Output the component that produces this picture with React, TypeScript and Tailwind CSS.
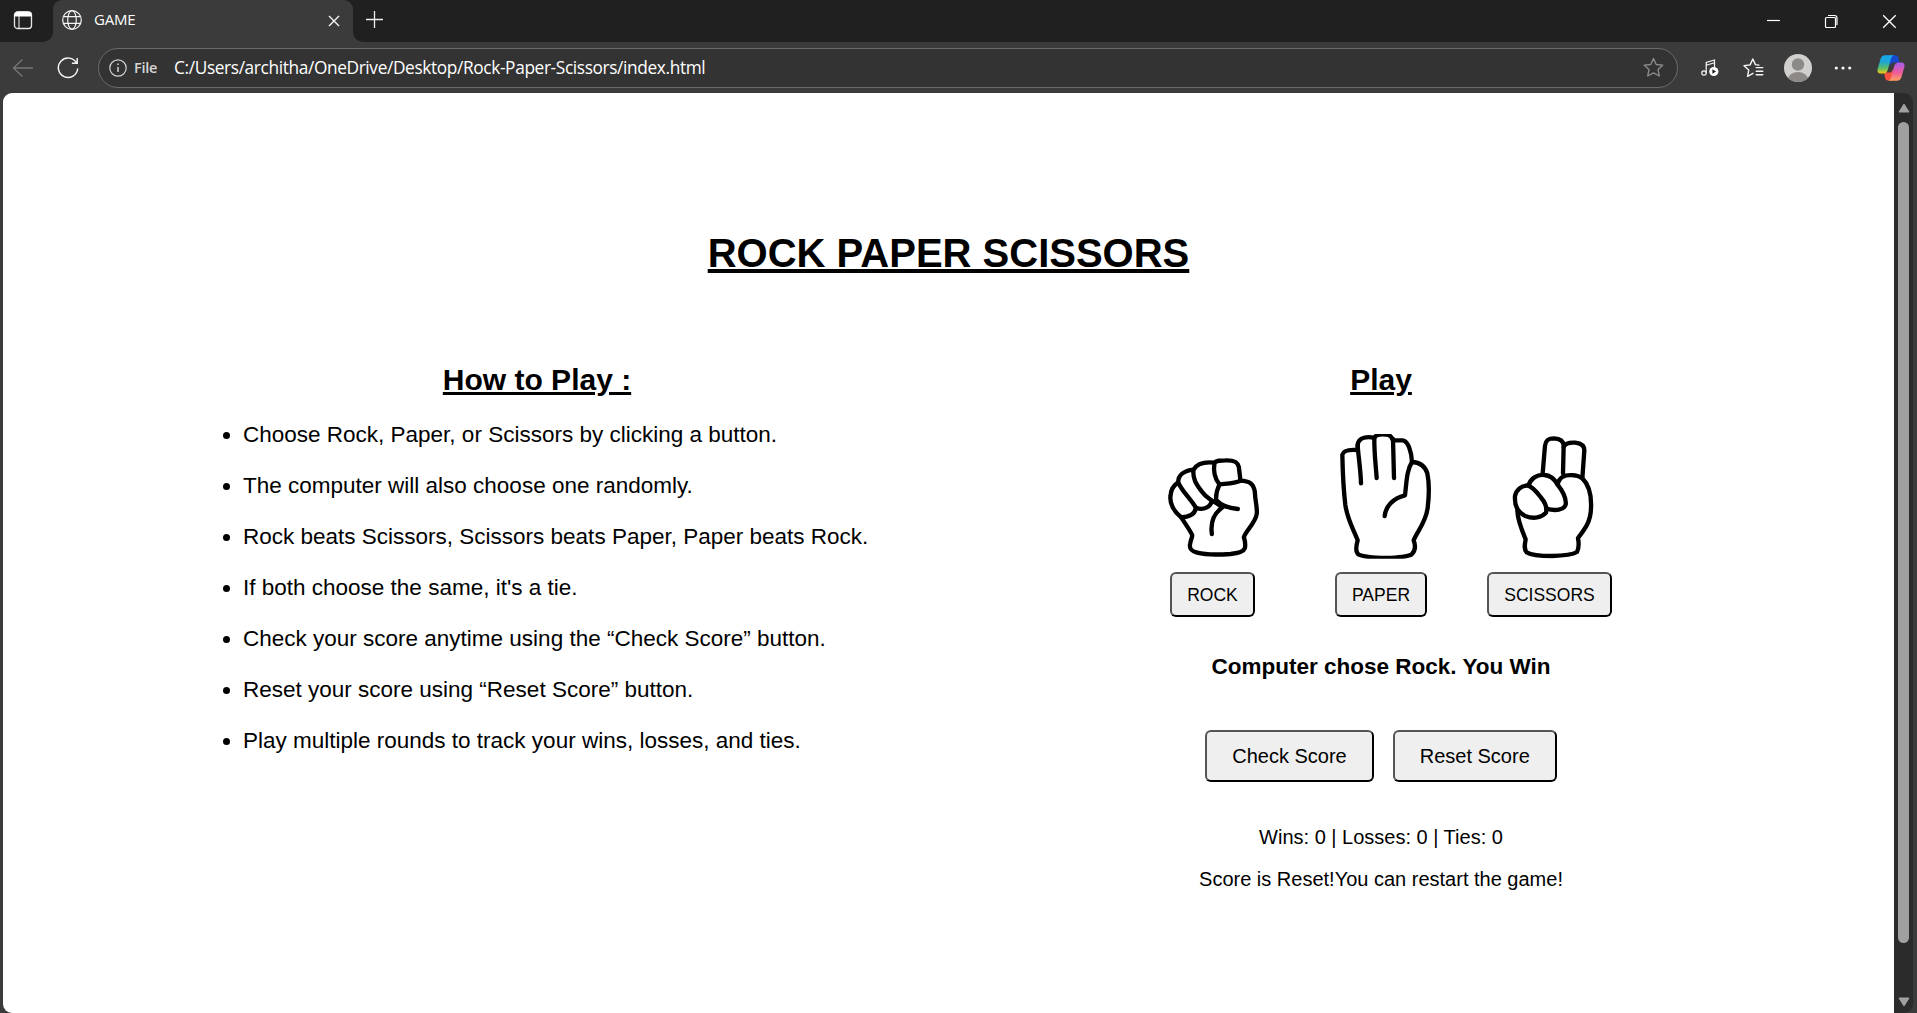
import React from "react";

const rules = [
  "Choose Rock, Paper, or Scissors by clicking a button.",
  "The computer will also choose one randomly.",
  "Rock beats Scissors, Scissors beats Paper, Paper beats Rock.",
  "If both choose the same, it's a tie.",
  "Check your score anytime using the “Check Score” button.",
  "Reset your score using “Reset Score” button.",
  "Play multiple rounds to track your wins, losses, and ties.",
];

const hands = [
  {
    name: "ROCK",
    viewBox: "-22.5 36 420 390",
    paths: [
      "M92 292 C70 275 57 250 60 228 C61 207 70 195 83 187 C83 166 100 152 129 149 C140 130 165 125 192 128 C198 121 207 121 225 121 C250 120 262 125 265 141 L270 182 C297 183 309 191 313 215 C314 245 320 258 319 280 C317 306 285 334 280 352 C284 363 286 371 283 385 C279 396 262 400 240 402 C210 404 165 405 140 398 C120 393 116 385 119 371 C121 358 126 352 125 345 C120 333 105 312 92 292",
      "M83 187 C95 215 120 235 136 263 C134 281 118 291 92 292",
      "M129 149 C126 176 137 192 152 212 C163 228 176 236 184 242 C181 260 160 273 136 263",
      "M192 128 C188 153 190 173 207 193 C235 190 252 190 270 182",
      "M207 193 C199 210 196 229 197 240 C211 256 232 264 262 267",
      "M184 242 C196 248 206 255 216 262 C192 280 179 301 184 342",
    ],
  },
  {
    name: "PAPER",
    viewBox: "-27 36 420 390",
    paths: [
      "M113 90 C90 88 70 91 67 104 C68 155 70 205 76 255 C83 302 101 328 113 361 C108 378 106 395 115 403 C130 411 160 413 198 414 C231 413 261 411 274 404 C286 394 288 380 281 361 C292 333 317 309 323 264 C327 230 327 184 322 160 C315 138 298 127 276 126 C275 98 265 63 248 61 C239 61 230 61 219 61 C213 43 201 43 188 43 C174 43 166 46 163 54 C145 49 115 50 113 75 Z",
      "M113 75 C115 110 122 148 123 190",
      "M163 52 C162 93 167 132 170 174",
      "M219 57 L222 174",
      "M276 126 C260 151 260 184 255 226 C218 235 197 260 194 288",
    ],
  },
  {
    name: "SCISSORS",
    viewBox: "0 36 420 390",
    paths: [
      "M188 160 L195 77 C197 59 207 55 222 55 C239 56 250 62 251 76 L249 160",
      "M251 80 C258 67 274 67 286 68 C303 70 313 78 313 91 L307 175",
      "M112 272 C113 300 125 330 137 358 C134 374 131 387 140 397 C156 407 188 408 216 408 C248 407 274 406 291 396 C298 383 297 371 294 354 C316 326 332 304 333 265 C335 222 325 192 307 175 C290 163 260 163 249 170 C238 176 235 184 233 194",
      "M145 197 C152 175 171 163 193 165 C213 166 225 180 233 194 C249 215 260 235 257 254 C252 270 227 274 199 266",
      "M145 197 C125 194 108 211 105 228 C103 257 112 277 136 288 C161 298 185 293 198 278 C202 262 194 246 184 234 C170 216 160 202 145 197 Z",
    ],
  },
];

function Hand({ viewBox, paths }: { viewBox: string; paths: string[] }) {
  return (
    <svg className="h-[130px] w-[140px]" viewBox={viewBox} fill="none" stroke="#000" strokeWidth="13" strokeLinecap="round" strokeLinejoin="round">
      <defs>
        <clipPath id="hand-frame">
          <rect x="0" y="42" width="420" height="374" />
        </clipPath>
      </defs>
      <g clipPath="url(#hand-frame)">
        {paths.map((d) => (
          <path key={d} d={d} />
        ))}
      </g>
    </svg>
  );
}

function TitleBar() {
  return (
    <div className="flex h-[42px] bg-[#202020]">
      <div className="w-[53px] bg-[#3b3b3b]">
        <div className="flex h-[42px] items-center rounded-br-[10px] bg-[#202020] pb-0.5 pl-[13px]">
          <svg className="h-5 w-5" viewBox="0 0 20 20" fill="none" stroke="#e8e8e8">
            <rect x="1.5" y="2" width="17" height="16.5" rx="3" strokeWidth="1.3" />
            <path d="M2 3.5Q2.5 2 5 2h10q3 0 3 3v1H2Z" fill="#fff" stroke="#fff" strokeWidth="1" />
            <path d="M6 6v12" strokeWidth="1.1" />
          </svg>
        </div>
      </div>
      <div className="flex w-[300px] items-center rounded-t-[9px] bg-[#3b3b3b] pb-0.5 pl-[9px]">
        <svg className="h-5 w-5" viewBox="0 0 20 20" fill="none" stroke="#f5f5f5" strokeWidth="1.2">
          <circle cx="10" cy="10" r="9.3" />
          <ellipse cx="10" cy="10" rx="4.3" ry="9.3" />
          <path d="M1.5 6.7h17M1.5 13.3h17" />
        </svg>
        <span className="mb-0.5 ml-3 text-[15px] leading-5 tracking-[-0.25px] text-white">GAME</span>
        <svg className="mt-px mr-[13px] ml-auto h-[12px] w-[12px]" viewBox="0 0 12 12" stroke="#f5f5f5" strokeWidth="1.4">
          <path d="M1 1l10 10M11 1L1 11" />
        </svg>
      </div>
      <div className="w-[62px] bg-[#3b3b3b]">
        <div className="h-[42px] rounded-bl-[10px] bg-[#202020] pt-[10px] pl-[12px]">
          <svg className="h-[19px] w-[19px]" viewBox="0 0 19 19" stroke="#f0f0f0" strokeWidth="1.3">
            <path d="M9.5 1v17M1 9.5h17" />
          </svg>
        </div>
      </div>
      <div className="flex flex-1 items-start justify-end bg-[#202020] pt-[14px] pr-[20px]">
        <svg className="h-[15px] w-[15px]" viewBox="0 0 15 15" stroke="#fff" strokeWidth="1.2">
          <path d="M1 6.5h13" />
        </svg>
        <svg className="ml-[43px] h-[15px] w-[15px]" viewBox="0 0 15 15" fill="none" stroke="#fff" strokeWidth="1.2">
          <rect x="1.5" y="3.5" width="10" height="10" rx="1" />
          <path d="M4 1.5h6.500q2.500 0 2.500 2.500v7" />
        </svg>
        <svg className="ml-[43px] h-[15px] w-[15px]" viewBox="0 0 15 15" stroke="#fff" strokeWidth="1.3">
          <path d="M1.2 1.2l12.5 12.5M13.7 1.2L1.2 13.7" />
        </svg>
      </div>
    </div>
  );
}

function StarOutline() {
  return <path d="M10 1.5l2.6 5.6 6.2.7-4.5 4.2 1.2 6.1L10 15.2l-5.5 2.9 1.2-6.1L1.2 7.8l6.2-.7Z" />;
}

function Toolbar() {
  return (
    <div className="flex h-[51px] items-center bg-[#3b3b3b]">
      <svg className="ml-3 h-[22px] w-[22px]" viewBox="0 0 22 22" fill="none" stroke="#777" strokeWidth="1.3">
        <path d="M21 11H1.5M10.5 2.5L1.5 11l9 8.5" />
      </svg>
      <svg className="ml-[23px] h-[22px] w-[22px]" viewBox="0 0 22 22" fill="none" stroke="#f5f5f5" strokeWidth="1.5">
        <path d="M19.6 6.2A9.7 9.7 0 1 0 20.7 11.5M20.2 1v5.3h-5.3" />
      </svg>
      <div className="ml-[19px] flex h-10 w-[1580px] items-center rounded-full border border-[#6b6b6b] bg-[#333] pr-[13px] pl-[10px]">
        <svg className="h-[18px] w-[18px]" viewBox="0 0 18 18" fill="none" stroke="#d0d0d0" strokeWidth="1.2">
          <circle cx="9" cy="9" r="8.2" />
          <path d="M9 8v5M9 4.6v1.5" strokeWidth="1.5" />
        </svg>
        <span className="ml-[7px] w-[40px] text-[14.5px] leading-5 font-semibold tracking-[-0.3px] text-[#d6d6d6]">File</span>
        <span className="text-[17.3px] leading-6 tracking-[-0.37px] whitespace-nowrap text-white">
          C:/Users/architha/OneDrive/Desktop/Rock-Paper-Scissors/index.html
        </span>
        <svg className="ml-auto h-[21px] w-[21px]" viewBox="0 0 20 20" fill="none" stroke="#8b8b8b" strokeWidth="1.3" strokeLinejoin="round">
          <StarOutline />
        </svg>
      </div>
      <svg className="ml-[23px] h-[19px] w-[18px]" viewBox="0 0 18 19" fill="none" stroke="#f5f5f5" strokeWidth="1.2">
        <circle cx="3" cy="15" r="2.2" />
        <path d="M5.2 15V4.5L13.5 2v7M5.2 7.3l8.3-2.5" />
        <circle cx="12.8" cy="13.5" r="4.6" fill="#fff" stroke="none" />
        <path d="M11.4 11.2v4.6l3.7-2.3Z" fill="#222" stroke="none" />
      </svg>
      <svg className="ml-[23px] h-[21px] w-[22px]" viewBox="0 0 22 21" fill="none" stroke="#f5f5f5" strokeWidth="1.4" strokeLinejoin="round" strokeLinecap="round">
        <path d="M11 16.3l-5.4 3 1.1-6.2-4.7-4.3 6.1-.9L10.8 2l2.6 5.6 3.5.5M14.2 10.6h6.6M14.2 14.2h6.6M14.2 17.8h6.6" />
      </svg>
      <svg className="ml-[20px] h-7 w-7" viewBox="0 0 28 28">
        <defs>
          <clipPath id="avatar">
            <circle cx="14" cy="14" r="14" />
          </clipPath>
        </defs>
        <g clipPath="url(#avatar)">
          <path d="M0 0h28v28H0Z" fill="#d2d0ce" />
          <circle cx="14" cy="10.5" r="6.2" fill="#8d8986" />
          <ellipse cx="14" cy="25.5" rx="10" ry="7.5" fill="#8d8986" />
        </g>
      </svg>
      <svg className="ml-[22px] h-5 w-[18px]" viewBox="0 0 18 20" fill="#f5f5f5">
        <circle cx="2.3" cy="10" r="1.6" />
        <circle cx="9" cy="10" r="1.6" />
        <circle cx="15.7" cy="10" r="1.6" />
      </svg>
      <svg className="ml-[25px] h-7 w-7" viewBox="0 0 28 28">
        <defs>
          <linearGradient id="cool" x1="0" y1="0" x2="0" y2="1">
            <stop offset="0" stopColor="#13a9ee" />
            <stop offset=".35" stopColor="#1fa5d8" />
            <stop offset=".7" stopColor="#58bd68" />
            <stop offset="1" stopColor="#f8ca12" />
          </linearGradient>
          <linearGradient id="warm" x1="0" y1="0" x2="0" y2="1">
            <stop offset="0" stopColor="#a45cf0" />
            <stop offset=".55" stopColor="#ee5a9c" />
            <stop offset="1" stopColor="#ffa15c" />
          </linearGradient>
        </defs>
        <path d="M13 1.2h5.5c1.7 0 2.4 1 2.9 2.6l1 4.7h-5c-3 0-3.6 1.5-4.5 4.5Z" fill="#1748cf" />
        <path d="M7 18.5h5c3 0 3.5-1.8 4.5-5l-1.7 13H11c-2 0-2.5-1.3-3-3Z" fill="#f5513c" />
        <path d="M8.2 1.2h9c-2 .4-2.8 2-3.4 4l-3 10.6c-.8 2.6-2 3.8-4.8 3.8H3.7C.8 19.6-.1 17.7.8 14.5l2.7-9.5C4.3 2.5 5.6 1.2 8.2 1.2Z" fill="url(#cool)" />
        <path d="M19.8 26.8h-9c2-.4 2.8-2 3.4-4l3-10.6c.8-2.6 2-3.8 4.8-3.8h2.3c2.9 0 3.8 1.9 2.9 5.1L24.500 23c-.8 2.5-2.1 3.8-4.7 3.8Z" fill="url(#warm)" />
      </svg>
    </div>
  );
}

function Scrollbar() {
  return (
    <div className="flex w-[19px] flex-col items-center rounded-r-[9px] bg-[#2b2b2b] pt-[10px] pb-[6px]">
      <svg className="h-[10px] w-3" viewBox="0 0 12 10" fill="#a0a0a0" stroke="#a0a0a0" strokeLinejoin="round">
        <path d="M6 1l5 8H1Z" />
      </svg>
      <div className="mt-[9px] h-[821px] w-[11px] rounded-full bg-[#a0a0a0]" />
      <svg className="mt-auto h-[10px] w-3" viewBox="0 0 12 10" fill="#a0a0a0" stroke="#a0a0a0" strokeLinejoin="round">
        <path d="M6 9l5-8H1Z" />
      </svg>
    </div>
  );
}

const buttonClass =
  "rounded-[6px] border-2 border-t-[#555] border-l-[#555] border-r-black border-b-black bg-[#efefef] text-black";

export default function App() {
  return (
    <div className="flex h-[1013px] w-[1917px] flex-col overflow-hidden bg-[#3b3b3b] font-['Open_Sans',sans-serif]">
      <TitleBar />
      <Toolbar />
      <div className="flex flex-1 pl-[3px]">
        <main className="w-[1891px] rounded-l-[9px] bg-white pt-[138px] font-['Liberation_Sans',Arial,sans-serif] text-black">
          <h1 className="text-center text-[40px] leading-[44px] font-bold underline decoration-4 underline-offset-2">ROCK PAPER SCISSORS</h1>
          <div className="mt-[88px] ml-[112px] flex">
            <section className="w-[844px]">
              <h2 className="text-center text-[30px] leading-[33px] font-bold underline decoration-3 underline-offset-2">How to Play :</h2>
              <ul className="mt-[26px] list-disc space-y-[26px] pl-32 text-[22.5px] leading-[25px]">
                {rules.map((rule) => (
                  <li key={rule}>{rule}</li>
                ))}
              </ul>
            </section>
            <section className="flex w-[844px] flex-col items-center">
              <h2 className="text-[30px] leading-[33px] font-bold underline decoration-3 underline-offset-2">Play</h2>
              <div className="mt-[36px] flex gap-[28.5px]">
                {hands.map((hand) => (
                  <div key={hand.name} className="flex flex-col items-center">
                    <Hand viewBox={hand.viewBox} paths={hand.paths} />
                    <button className={`${buttonClass} mt-[10px] h-[45px] px-[15px] text-[17.5px] leading-5`}>{hand.name}</button>
                  </div>
                ))}
              </div>
              <p className="mt-[37px] text-[22.5px] leading-[25px] font-bold">Computer chose Rock. You Win</p>
              <div className="mt-[51px] flex gap-[19px]">
                <button className={`${buttonClass} h-[52px] px-[25px] text-xl leading-[22px]`}>Check Score</button>
                <button className={`${buttonClass} h-[52px] px-[25px] text-xl leading-[22px]`}>Reset Score</button>
              </div>
              <p className="mt-11 text-xl leading-[22px]">Wins: 0 | Losses: 0 | Ties: 0</p>
              <p className="mt-5 text-xl leading-[22px]">Score is Reset!You can restart the game!</p>
            </section>
          </div>
        </main>
        <Scrollbar />
      </div>
    </div>
  );
}
